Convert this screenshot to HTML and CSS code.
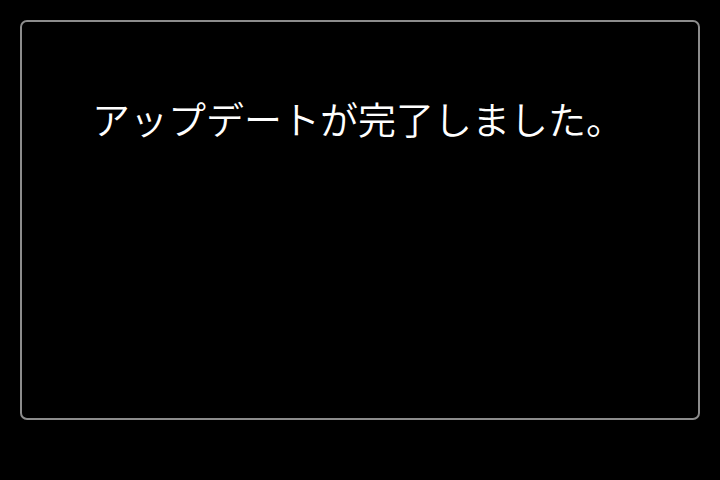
FILE: index.html
```html
<!DOCTYPE html>
<html lang="ja">
<head>
<meta charset="utf-8">
<link rel="stylesheet" href="styles.css">
</head>
<body>
<div class="dialog">
  <p class="message">アップデートが完了しました。</p>
</div>
</body>
</html>
```

FILE: styles.css
```css
html, body {
  margin: 0;
  padding: 0;
  background: #000;
}
body {
  width: 720px;
  height: 480px;
  padding: 20px;
  box-sizing: border-box;
}
.dialog {
  width: 680px;
  height: 400px;
  box-sizing: border-box;
  border: 2px solid #8c8c8c;
  border-radius: 7px;
  padding: 73px 20px 0 70px;
}
.message {
  margin: 0;
  color: #fff;
  font-family: "Noto Sans CJK JP", sans-serif;
  font-weight: 350;
  font-size: 38px;
  line-height: 46px;
  white-space: nowrap;
}
```
